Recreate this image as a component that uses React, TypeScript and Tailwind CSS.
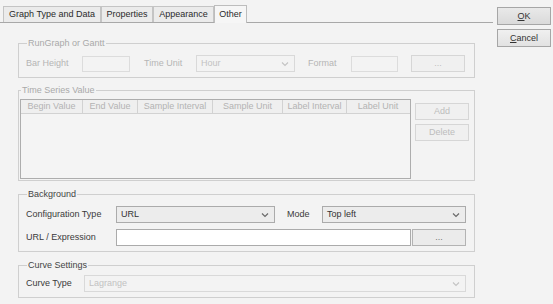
import { ReactNode } from "react";

const font = "font-['Liberation_Sans',Arial,sans-serif]";

function Chevron({ disabled }: { disabled?: boolean }) {
  return (
    <svg width="8" height="6" viewBox="0 0 8 6" className="shrink-0">
      <path
        d="M1 1.5 L4 4.5 L7 1.5"
        fill="none"
        stroke={disabled ? "#c4c4c4" : "#6a6a6a"}
        strokeWidth="1.2"
      />
    </svg>
  );
}

function Group({
  title,
  muted,
  className,
  children,
}: {
  title: string;
  muted?: boolean;
  className: string;
  children: ReactNode;
}) {
  return (
    <fieldset
      className={`ml-[18px] w-[457px] border border-[#cfcfcf] ${className}`}
    >
      <legend
        className={`ml-[1px] px-[1px] text-[9px] leading-[11px] ${
          muted ? "text-[#a9a9a9]" : "text-[#444]"
        }`}
      >
        {title}
      </legend>
      {children}
    </fieldset>
  );
}

function Select({
  value,
  width,
  disabled,
}: {
  value: string;
  width: string;
  disabled?: boolean;
}) {
  return (
    <div
      className={`flex h-[17px] items-center justify-between border pl-[4px] pr-[5px] text-[9px] ${width} ${
        disabled
          ? "border-[#d9d9d9] bg-[#f3f3f3] text-[#c2c2c2]"
          : "border-[#ababab] bg-[#ececec] text-[#333]"
      }`}
    >
      <span>{value}</span>
      <Chevron disabled={disabled} />
    </div>
  );
}

function Button({
  children,
  width,
  disabled,
  className = "",
}: {
  children: ReactNode;
  width: string;
  disabled?: boolean;
  className?: string;
}) {
  return (
    <div
      className={`flex h-[17px] items-center justify-center border text-[9px] ${width} ${className} ${
        disabled
          ? "border-[#d6d6d6] bg-[#f0f0f0] text-[#bdbdbd]"
          : "border-[#b3b3b3] bg-[#ebebeb] text-[#777]"
      }`}
    >
      {children}
    </div>
  );
}

const tabs = [
  { label: "Graph Type and Data", w: "w-[98px]" },
  { label: "Properties", w: "w-[52px]" },
  { label: "Appearance", w: "w-[61px]" },
];

const columns = [
  { label: "Begin Value", w: "w-[62px]" },
  { label: "End Value", w: "w-[55px]" },
  { label: "Sample Interval", w: "w-[75px]" },
  { label: "Sample Unit", w: "w-[70px]" },
  { label: "Label Interval", w: "w-[64px]" },
  { label: "Label Unit", w: "w-[62px]" },
];

export default function App() {
  return (
    <div
      className={`flex h-[304px] w-[553px] bg-[#f3f3f3] text-[9px] leading-[11px] ${font}`}
    >
      {/* tabbed panel */}
      <div className="flex w-[493px] flex-col">
        <div className="flex items-end pl-[3px] pt-[5px]">
          {tabs.map((t) => (
            <div
              key={t.label}
              className={`flex h-[16px] items-center justify-center border border-b-0 border-[#c4c4c4] bg-[#ebebeb] text-[#2a2a2a] ${t.w}`}
            >
              {t.label}
            </div>
          ))}
          <div className="relative -mb-[1px] flex h-[18px] w-[33px] items-center justify-center border border-b-0 border-[#bdbdbd] bg-[#f6f6f6] text-[#2a2a2a]">
            Other
          </div>
        </div>
        <div className="flex-1 border-t border-[#a8a8a8]">
          <Group title="RunGraph or Gantt" muted className="mt-[15px] pb-[5px] pl-[7px] pt-[6px]">
            <div className="flex h-[17px] items-center text-[#b5b5b5]">
              <span className="w-[56px]">Bar Height</span>
              <div className="h-[16px] w-[48px] border border-[#dcdcdc] bg-[#f3f3f3]" />
              <span className="ml-[14px] w-[52px]">Time Unit</span>
              <Select value="Hour" width="w-[99px]" disabled />
              <span className="ml-[13px] w-[43px]">Format</span>
              <div className="h-[16px] w-[47px] border border-[#dcdcdc] bg-[#f3f3f3]" />
              <Button width="w-[54px]" disabled className="ml-[13px]">
                ...
              </Button>
            </div>
          </Group>

          <Group title="Time Series Value" muted className="mt-[7px] pb-[1px] pl-[1px] pt-[3px]">
            <div className="flex">
              <div className="flex h-[80px] w-[391px] flex-col border border-[#adadad] bg-[#f4f4f4]">
                <div className="flex h-[14px] border-b border-[#d2d2d2] bg-[#efefef] text-[#b3b3b3]">
                  {columns.map((c, i) => (
                    <div
                      key={c.label}
                      className={`flex items-center justify-center ${c.w} ${
                        i < columns.length - 1 ? "border-r border-[#d2d2d2]" : ""
                      }`}
                    >
                      {c.label}
                    </div>
                  ))}
                </div>
              </div>
              <div className="ml-[4px] mt-[4px] flex flex-col gap-[4px]">
                <Button width="w-[54px]" disabled>
                  Add
                </Button>
                <Button width="w-[54px]" disabled>
                  Delete
                </Button>
              </div>
            </div>
          </Group>

          <Group title="Background" className="mt-[8px] pb-[5px] pl-[7px] pt-[6px]">
            <div className="flex flex-col gap-[6px] text-[#3a3a3a]">
              <div className="flex h-[17px] items-center">
                <span className="w-[90px]">Configuration Type</span>
                <Select value="URL" width="w-[159px]" />
                <span className="ml-[12px] w-[35px]">Mode</span>
                <Select value="Top left" width="w-[144px]" />
              </div>
              <div className="flex h-[17px] items-center">
                <span className="w-[90px]">URL / Expression</span>
                <div className="h-[17px] w-[295px] border border-[#ababab] bg-white" />
                <Button width="w-[54px]" className="ml-[1px]">
                  ...
                </Button>
              </div>
            </div>
          </Group>

          <Group title="Curve Settings" className="mt-[8px] pb-[5px] pl-[7px] pt-[4px]">
            <div className="flex h-[17px] items-center text-[#3a3a3a]">
              <span className="w-[58px]">Curve Type</span>
              <Select value="Lagrange" width="w-[382px]" disabled />
            </div>
          </Group>
        </div>
      </div>

      {/* dialog buttons */}
      <div className="ml-[4px] flex flex-col gap-[4px] pt-[7px]">
        <div className="flex h-[18px] w-[54px] items-center justify-center border border-[#a6a6a6] bg-gradient-to-b from-[#e9e9e9] to-[#dadada] text-[#333]">
          <span>
            <span className="underline">O</span>K
          </span>
        </div>
        <div className="flex h-[18px] w-[54px] items-center justify-center border border-[#a6a6a6] bg-gradient-to-b from-[#f0f0f0] to-[#e2e2e2] text-[#333]">
          <span>
            <span className="underline">C</span>ancel
          </span>
        </div>
      </div>
    </div>
  );
}
